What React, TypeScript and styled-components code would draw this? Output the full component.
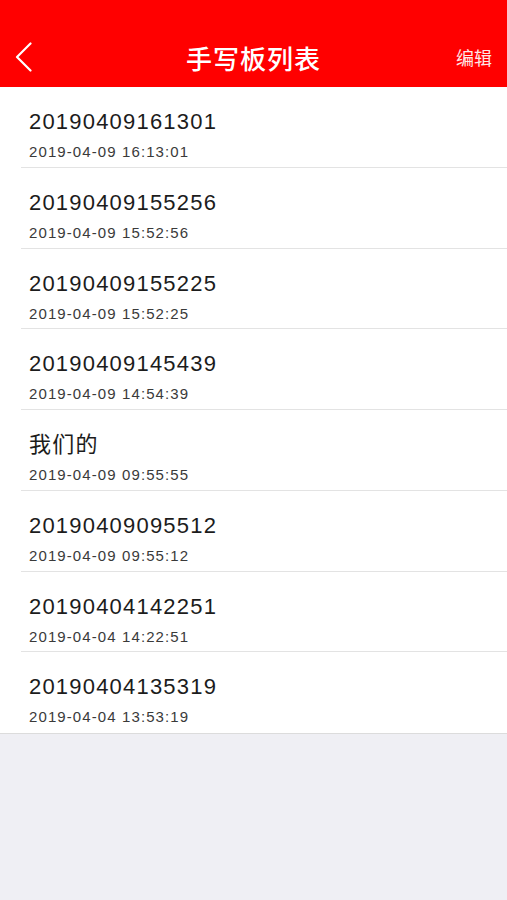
import styled, { createGlobalStyle } from "styled-components";

type NoteItem = {
  name: string;
  time: string;
};

const notes: NoteItem[] = [
  { name: "20190409161301", time: "2019-04-09 16:13:01" },
  { name: "20190409155256", time: "2019-04-09 15:52:56" },
  { name: "20190409155225", time: "2019-04-09 15:52:25" },
  { name: "20190409145439", time: "2019-04-09 14:54:39" },
  { name: "我们的", time: "2019-04-09 09:55:55" },
  { name: "20190409095512", time: "2019-04-09 09:55:12" },
  { name: "20190404142251", time: "2019-04-04 14:22:51" },
  { name: "20190404135319", time: "2019-04-04 13:53:19" },
];

const GlobalStyle = createGlobalStyle`
  html, body {
    margin: 0;
    padding: 0;
    background: #efeff4;
  }
  body {
    font-family: "Liberation Sans", "Noto Sans CJK SC", sans-serif;
  }
`;

const Page = styled.div`
  width: 507px;
  min-height: 900px;
  background: #efeff4;
`;

const Header = styled.header`
  height: 87px;
  background: #ff0000;
  display: flex;
  align-items: flex-end;
`;

const NavBar = styled.div`
  height: 60px;
  width: 100%;
  display: grid;
  grid-template-columns: 80px 1fr 80px;
  align-items: center;
`;

const BackButton = styled.div`
  padding-left: 14px;
  display: flex;
  align-items: center;
`;

const Title = styled.h1`
  margin: 0;
  text-align: center;
  color: #fff;
  font-family: "Noto Sans CJK SC", sans-serif;
  font-weight: 500;
  font-size: 26px;
  letter-spacing: 1px;
`;

const EditButton = styled.div`
  text-align: right;
  padding-right: 15px;
  color: #fff;
  font-family: "Noto Sans CJK SC", sans-serif;
  font-size: 18px;
  opacity: 0.9;
`;

const List = styled.ul`
  margin: 0;
  padding: 0;
  list-style: none;
  background: #fff;
  border-bottom: 1px solid #dcdcdc;
`;

const Row = styled.li<{ $last: boolean }>`
  height: 80.75px;
  box-sizing: border-box;
  margin-left: 21px;
  padding: 22px 0 0 8px;
  border-bottom: ${(props) => (props.$last ? "none" : "1px solid #e3e3e3")};
`;

const Name = styled.div`
  font-size: 22px;
  line-height: 26px;
  letter-spacing: 1.2px;
  color: #1c1c1c;
`;

const Time = styled.div`
  margin-top: 8px;
  font-size: 15px;
  line-height: 18px;
  letter-spacing: 1.1px;
  color: #3a3a3a;
`;

const ChevronLeft = () => (
  <svg width="20" height="30" viewBox="0 0 20 30">
    <path
      d="M16.5 1.5 L3 15 L16.5 28.5"
      fill="none"
      stroke="#fff"
      strokeWidth="2.2"
      strokeLinecap="round"
      strokeLinejoin="round"
    />
  </svg>
);

export default function App() {
  return (
    <Page>
      <GlobalStyle />
      <Header>
        <NavBar>
          <BackButton>
            <ChevronLeft />
          </BackButton>
          <Title>手写板列表</Title>
          <EditButton>编辑</EditButton>
        </NavBar>
      </Header>
      <List>
        {notes.map((note, index) => (
          <Row key={note.time} $last={index === notes.length - 1}>
            <Name>{note.name}</Name>
            <Time>{note.time}</Time>
          </Row>
        ))}
      </List>
    </Page>
  );
}
